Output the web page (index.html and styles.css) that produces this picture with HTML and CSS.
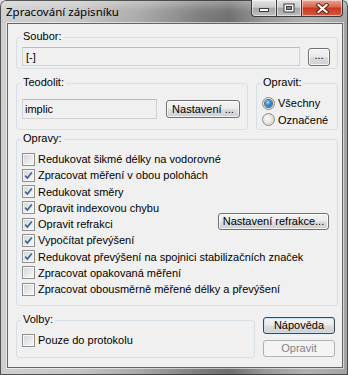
FILE: index.html
```html
<!DOCTYPE html>
<html lang="cs">
<head>
<meta charset="utf-8">
<title>Zpracování zápisníku</title>
<link rel="stylesheet" href="styles.css">
</head>
<body>
<div class="window">
  <div class="titlebar">
    <span class="title">Zpracování zápisníku</span>
    <div class="caption-btns">
      <span class="cbtn min"><svg width="12" height="6" viewBox="0 0 12 6"><rect x="1.5" y="1.5" width="9" height="3" fill="#fff" stroke="#3a3a3a"/></svg></span>
      <span class="cbtn max"><svg width="12" height="10" viewBox="0 0 12 10"><rect x="0.5" y="0.5" width="11" height="9" fill="#3a3a3a"/><rect x="1.5" y="1.5" width="9" height="7" fill="#fff"/><rect x="3.5" y="3.5" width="5" height="3" fill="#8a8a8a" stroke="#3a3a3a"/></svg></span>
      <span class="cbtn close"><svg width="13" height="11" viewBox="0 0 13 11"><path d="M2.5 2 L10.5 9 M10.5 2 L2.5 9" stroke="#5a1a10" stroke-width="4" stroke-linecap="square"/><path d="M2.5 2 L10.5 9 M10.5 2 L2.5 9" stroke="#fff" stroke-width="2.2" stroke-linecap="square"/></svg></span>
    </div>
  </div>
  <div class="client">
    <div class="group g-soubor">
      <div class="gtitle">Soubor:</div>
      <div class="hrow r-soubor">
        <div class="edit e-file">[-]</div>
        <div class="btn b-browse">...</div>
      </div>
    </div>

    <div class="row2">
      <div class="group g-teo">
        <div class="gtitle">Teodolit:</div>
        <div class="hrow r-teo">
          <div class="edit e-teo">implic</div>
          <div class="btn b-nast">Nastavení ...</div>
        </div>
      </div>
      <div class="group g-opravit">
        <div class="gtitle">Opravit:</div>
        <div class="radios">
          <div class="radio-row"><span class="radio on"><span class="dot"></span></span><span>Všechny</span></div>
          <div class="radio-row"><span class="radio"></span><span>Označené</span></div>
        </div>
      </div>
    </div>

    <div class="group g-opravy">
      <div class="gtitle">Opravy:</div>
      <div class="checks">
        <div class="check-row"><span class="cb"></span><span>Redukovat šikmé délky na vodorovné</span></div>
        <div class="check-row"><span class="cb"><svg class="tick" width="9" height="9" viewBox="0 0 9 9"><path d="M1.2 4.6 L3.4 7 L7.8 1.4" fill="none" stroke="#3d5f9e" stroke-width="1.6"/></svg></span><span>Zpracovat měření v obou polohách</span></div>
        <div class="check-row"><span class="cb"><svg class="tick" width="9" height="9" viewBox="0 0 9 9"><path d="M1.2 4.6 L3.4 7 L7.8 1.4" fill="none" stroke="#3d5f9e" stroke-width="1.6"/></svg></span><span>Redukovat směry</span></div>
        <div class="check-row"><span class="cb"><svg class="tick" width="9" height="9" viewBox="0 0 9 9"><path d="M1.2 4.6 L3.4 7 L7.8 1.4" fill="none" stroke="#3d5f9e" stroke-width="1.6"/></svg></span><span>Opravit indexovou chybu</span></div>
        <div class="check-row"><span class="cb"><svg class="tick" width="9" height="9" viewBox="0 0 9 9"><path d="M1.2 4.6 L3.4 7 L7.8 1.4" fill="none" stroke="#3d5f9e" stroke-width="1.6"/></svg></span><span>Opravit refrakci</span><div class="btn b-refr">Nastavení refrakce...</div></div>
        <div class="check-row"><span class="cb"><svg class="tick" width="9" height="9" viewBox="0 0 9 9"><path d="M1.2 4.6 L3.4 7 L7.8 1.4" fill="none" stroke="#3d5f9e" stroke-width="1.6"/></svg></span><span>Vypočítat převýšení</span></div>
        <div class="check-row"><span class="cb"><svg class="tick" width="9" height="9" viewBox="0 0 9 9"><path d="M1.2 4.6 L3.4 7 L7.8 1.4" fill="none" stroke="#3d5f9e" stroke-width="1.6"/></svg></span><span>Redukovat převýšení na spojnici stabilizačních značek</span></div>
        <div class="check-row"><span class="cb"></span><span>Zpracovat opakovaná měření</span></div>
        <div class="check-row"><span class="cb"></span><span>Zpracovat obousměrně měřené délky a převýšení</span></div>
      </div>
    </div>

    <div class="row4">
      <div class="group g-volby">
        <div class="gtitle">Volby:</div>
        <div class="check-row r-volby"><span class="cb"></span><span>Pouze do protokolu</span></div>
      </div>
      <div class="btncol">
        <div class="btn b-default">Nápověda</div>
        <div class="btn b-disabled">Opravit</div>
      </div>
    </div>
  </div>
</div>
</body>
</html>
```

FILE: styles.css
```css
html, body {
  margin: 0;
  padding: 0;
}
body {
  width: 348px;
  height: 375px;
  overflow: hidden;
  background: #d9dde2;
  font-family: "Liberation Sans", Arial, sans-serif;
  font-size: 11px;
  color: #000;
}
.window {
  width: 348px;
  height: 375px;
  display: flex;
  flex-direction: column;
  border-radius: 6px 6px 0 0;
  background:
    linear-gradient(180deg, rgba(255,255,255,0.35) 0, rgba(255,255,255,0.05) 11px, rgba(0,0,0,0) 23px),
    linear-gradient(90deg, #cfcfcf 0, #c6c6c6 22%, #a9a9a9 40%, #7b7b7b 58%, #6e6e6e 66%, #979797 76%, #b1b1b1 88%, #a4a4a4 100%);
  box-shadow: inset 0 0 0 1px rgba(40,40,40,0.75);
}
.titlebar {
  height: 23px;
  flex: none;
  display: flex;
  align-items: flex-start;
}
.title {
  font-family: "Noto Sans", "Open Sans", sans-serif;
  font-size: 11.5px;
  line-height: 15px;
  padding: 4px 0 0 6px;
  color: #000;
  white-space: nowrap;
}
.caption-btns {
  margin-left: auto;
  margin-right: 5px;
  display: flex;
  height: 17px;
}
.cbtn {
  box-sizing: border-box;
  height: 17px;
  border: 1px solid #3b3b3b;
  border-top: 0;
  display: flex;
  align-items: center;
  justify-content: center;
  box-shadow: inset 0 0 0 1px rgba(255,255,255,0.5);
  background: linear-gradient(180deg, #e4e4e4 0%, #cbcbcb 45%, #a8a8a8 52%, #bdbdbd 100%);
}
.cbtn svg { display: block; }
.min {
  width: 25px;
  border-right: 0;
  border-radius: 0 0 0 4px;
  align-items: flex-end;
  padding-bottom: 3px;
}
.max {
  width: 25px;
  border-right: 0;
}
.close {
  width: 42px;
  border-radius: 0 0 4px 0;
  background: linear-gradient(180deg, #eaa494 0%, #d9684f 42%, #c33a22 52%, #d65b3e 100%);
}

.client {
  flex: none;
  box-sizing: border-box;
  width: 336px;
  height: 345px;
  margin-left: 7px;
  border: 1px solid #656565;
  box-shadow: 0 0 0 1px rgba(255,255,255,0.55);
  background: #f0f0f0;
  padding: 13px 4px 0 8px;
}

.group {
  box-sizing: border-box;
  border: 1px solid #d5dfe5;
  border-radius: 3px;
  padding-left: 5px;
}
.gtitle {
  width: fit-content;
  margin: -8px 0 0 -1px;
  padding: 0 2px;
  line-height: 13px;
  height: 13px;
  background: #f0f0f0;
}
.hrow {
  display: flex;
  align-items: center;
}

.edit {
  box-sizing: border-box;
  border: 1px solid #cfd1d5;
  border-top-color: #b9bcc1;
  background: #f0f0f0;
  padding-left: 3px;
  display: flex;
  align-items: center;
}
.btn {
  box-sizing: border-box;
  border: 1px solid #707070;
  border-radius: 3px;
  background: linear-gradient(180deg, #f3f3f3 0%, #ebebeb 48%, #dddddd 52%, #cfcfcf 100%);
  box-shadow: inset 0 0 0 1px rgba(255,255,255,0.75);
  display: flex;
  align-items: center;
  justify-content: center;
  white-space: nowrap;
  line-height: 13px;
}

.g-soubor { height: 32px; }
.r-soubor { margin-top: 4px; }
.e-file { width: 278px; height: 19px; }
.b-browse { width: 22px; height: 18px; margin-left: 8px; padding-bottom: 3px; }

.row2 {
  display: flex;
  gap: 8px;
  margin-top: 14px;
}
.g-teo { width: 232px; height: 47px; }
.r-teo { margin-top: 10px; }
.e-teo { width: 135px; height: 20px; padding-left: 2px; }
.b-nast { width: 74px; height: 18px; margin-left: 9px; }

.g-opravit { width: 82px; height: 47px; }
.radios { margin-top: 6px; }
.radio-row {
  height: 16.5px;
  display: flex;
  align-items: center;
  gap: 3px;
}
.radio {
  box-sizing: border-box;
  width: 13px;
  height: 13px;
  border-radius: 50%;
  border: 1px solid #8b8b8b;
  background: radial-gradient(circle at 40% 40%, #f8f8f8 0, #e6e6e6 45%, #c9c9c9 100%);
  display: flex;
  align-items: center;
  justify-content: center;
}
.dot {
  width: 7px;
  height: 7px;
  border-radius: 50%;
  background: radial-gradient(circle at 40% 35%, #a9dcff 0, #3d8fd6 40%, #1a4f93 100%);
  box-shadow: 0 0 0 1px #54697e;
}

.g-opravy {
  height: 167px;
  margin-top: 9px;
}
.checks { margin-top: 6px; }
.check-row {
  height: 16.25px;
  display: flex;
  align-items: center;
  gap: 3px;
  white-space: nowrap;
}
.cb {
  box-sizing: border-box;
  flex: none;
  width: 13px;
  height: 13px;
  border: 1px solid #8e8f8f;
  padding: 1px;
  background: linear-gradient(135deg, #d6d8db 0%, #f6f6f6 100%) content-box, #f8f8f8;
  display: flex;
  align-items: center;
  justify-content: center;
}
.tick { display: block; }
.b-refr {
  width: 111px;
  height: 17px;
  margin: -6px 8px 0 auto;
}

.row4 {
  display: flex;
  gap: 8px;
  margin-top: 11px;
}
.g-volby {
  width: 239px;
  height: 38px;
  margin-top: 3px;
}
.r-volby { margin-top: 6px; height: 16px; }
.btncol {
  width: 72px;
  display: flex;
  flex-direction: column;
  gap: 6px;
}
.btncol .btn { height: 17px; }
.b-default {
  border-color: #3f4650;
  box-shadow: inset 0 0 0 1px rgba(200,225,245,0.9);
}
.b-disabled {
  border-color: #adb2b5;
  background: #f4f4f4;
  box-shadow: none;
  color: #838383;
}
```
